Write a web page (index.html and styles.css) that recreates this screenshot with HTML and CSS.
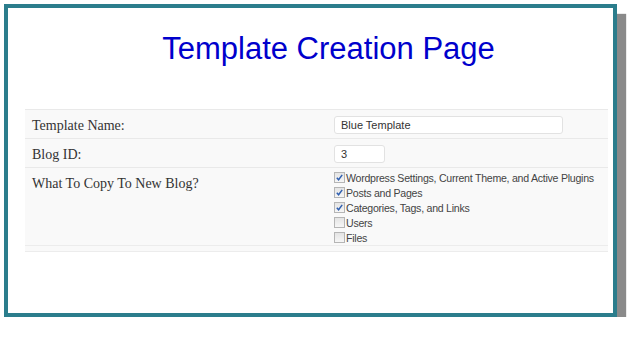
FILE: index.html
```html
<!DOCTYPE html>
<html lang="en">
<head>
  <meta charset="UTF-8">
  <title>Template Creation Page</title>
  <link rel="stylesheet" href="styles.css">
</head>
<body>
  <div class="frame">
    <h1 class="page-title">Template Creation Page</h1>

    <div class="form-table">
      <div class="form-row">
        <div class="form-label">Template Name:</div>
        <div class="form-field">
          <input type="text" class="text-input name-input" value="Blue Template">
        </div>
      </div>

      <div class="form-row">
        <div class="form-label">Blog ID:</div>
        <div class="form-field">
          <input type="text" class="text-input id-input" value="3">
        </div>
      </div>

      <div class="form-row copy-row">
        <div class="form-label">What To Copy To New Blog?</div>
        <div class="form-field check-list">
          <label class="check"><span class="box checked"><svg viewBox="0 0 10 10"><path d="M2 5.2 L4 7.5 L8 2"/></svg></span>Wordpress Settings, Current Theme, and Active Plugins</label>
          <label class="check"><span class="box checked"><svg viewBox="0 0 10 10"><path d="M2 5.2 L4 7.5 L8 2"/></svg></span>Posts and Pages</label>
          <label class="check"><span class="box checked"><svg viewBox="0 0 10 10"><path d="M2 5.2 L4 7.5 L8 2"/></svg></span>Categories, Tags, and Links</label>
          <label class="check"><span class="box"></span>Users</label>
          <label class="check"><span class="box"></span>Files</label>
        </div>
      </div>
    </div>
  </div>
</body>
</html>
```

FILE: styles.css
```css
body { margin: 0; background: #fff; }

.frame {
  box-sizing: border-box;
  width: 613px;
  height: 313px;
  margin: 4px 0 0 4px;
  border: 4px solid #2b7d8c;
  background: #fff;
  box-shadow: 9px 10px 1px #8a8a8a;
  padding: 0 5px 0 17px;
}

.page-title {
  margin: 23px 0 0 0;
  padding-left: 24px;
  text-align: center;
  font-family: "Liberation Sans", Arial, sans-serif;
  font-weight: normal;
  font-size: 31px;
  line-height: 36px;
  color: #0000cc;
}

.form-table {
  margin-top: 42px;
  background: #f9f9f9;
  border-bottom: 1px solid #ececec;
  padding-bottom: 5px;
}

.form-row {
  display: grid;
  grid-template-columns: 302px 1fr;
  border-top: 1px solid #e9e9e9;
  height: 29px;
  box-sizing: border-box;
}

.copy-row { height: 79px; border-bottom: 1px solid #ececec; }

.form-label {
  padding: 8px 0 0 7px;
  font-family: "Liberation Serif", "Times New Roman", serif;
  font-size: 14px;
  color: #333;
}

.form-field { padding: 5px 0 0 7px; }

.text-input {
  box-sizing: border-box;
  height: 18px;
  border: 1px solid #e2e2e2;
  border-radius: 3px;
  background: #fff;
  padding: 0 6px;
  font-family: "Liberation Sans", Arial, sans-serif;
  font-size: 11px;
  color: #333;
  outline: none;
}

.name-input { width: 229px; }
.id-input { width: 51px; }

.check-list { padding-top: 2px; }

.check {
  display: flex;
  align-items: center;
  height: 15px;
  white-space: nowrap;
  font-family: "Liberation Sans", Arial, sans-serif;
  font-size: 10.6px;
  letter-spacing: -0.26px;
  color: #444;
}

.box {
  box-sizing: border-box;
  flex: none;
  width: 11px;
  height: 11px;
  margin-right: 1px;
  border: 1px solid #b5b5b5;
  background: linear-gradient(#e4e4e4, #f6f6f6);
  display: flex;
}

.box svg { width: 9px; height: 9px; }
.box path { fill: none; stroke: #2f5fb0; stroke-width: 1.6; }
```
